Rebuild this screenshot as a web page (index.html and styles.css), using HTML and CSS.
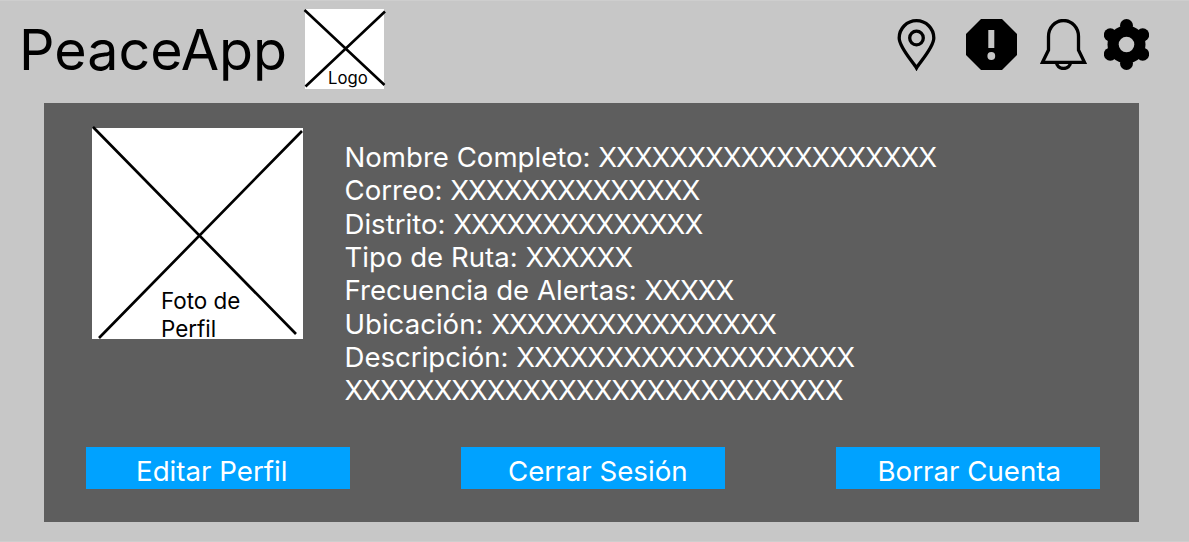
FILE: index.html
```
<!DOCTYPE html>
<html lang="es">
<head>
<meta charset="utf-8">
<title>PeaceApp</title>
<link rel="stylesheet" href="styles.css">
</head>
<body>
<header class="topbar">
  <h1 class="brand">PeaceApp</h1>
  <div class="logo">
    <svg class="cross" viewBox="0 0 79 80" fill="none" stroke="#000" stroke-width="2.600"><path d="M-.5 1 79.500 76M80 2.500 .5 77.500"/></svg>
    <span class="logo-label">Logo</span>
  </div>
  <nav class="icons">
    <svg class="icon-pin" viewBox="0 0 40 52" fill="none" stroke="#000" stroke-width="3.300"><path d="M19.500 49C16.500 43.500 2.200 28.500 2.200 19a17.300 17.300 0 0 1 34.600 0C36.800 28.500 22.500 43.500 19.500 49Z"/><circle cx="19.500" cy="19" r="6.800"/></svg>
    <svg class="icon-alert" viewBox="0 0 51 51"><path d="M15 0h21l15 15v21L36 51H15L0 36V15Z"/><path fill="#c7c7c7" d="M22.300 11h6v18h-6z"/><circle cx="25.300" cy="37" r="3.900" fill="#c7c7c7"/></svg>
    <svg class="icon-bell" viewBox="0 0 47 51" fill="none" stroke="#000" stroke-width="3.300"><path d="M2.500 43.300 8.500 31V17.500a15 16 0 0 1 30 0V31l6 12.300Z"/><path d="M16.500 43.500a7 6 0 0 0 14 0"/></svg>
    <svg class="icon-gear" viewBox="-22.500 -25.500 45 51"><circle r="19"/><circle cy="-19" r="6.500"/><circle cy="19" r="6.500"/><circle cx="-16.200" cy="-9.700" r="6.500"/><circle cx="16.200" cy="-9.700" r="6.500"/><circle cx="-16.200" cy="9.700" r="6.500"/><circle cx="16.200" cy="9.700" r="6.500"/><circle r="7.800" fill="#c7c7c7"/></svg>
  </nav>
</header>
<main class="panel">
  <section class="profile">
    <div class="photo">
      <svg class="cross" viewBox="0 0 211 211" fill="none" stroke="#000" stroke-width="2.700"><path d="M1-1 204 206M210 3 7 210"/></svg>
      <span class="photo-label">Foto de<br>Perfil</span>
    </div>
    <div class="details">
      <div>Nombre Completo: <span class="value">XXXXXXXXXXXXXXXXXXX</span></div>
      <div>Correo: <span class="value">XXXXXXXXXXXXXX</span></div>
      <div>Distrito: <span class="value">XXXXXXXXXXXXXX</span></div>
      <div>Tipo de Ruta: <span class="value">XXXXXX</span></div>
      <div>Frecuencia de Alertas: <span class="value">XXXXX</span></div>
      <div>Ubicación: <span class="value">XXXXXXXXXXXXXXXX</span></div>
      <div>Descripción: <span class="value">XXXXXXXXXXXXXXXXXXX</span></div>
      <div><span class="value">XXXXXXXXXXXXXXXXXXXXXXXXXXXX</span></div>
    </div>
  </section>
  <div class="actions">
    <button class="action edit">Editar Perfil</button>
    <button class="action logout">Cerrar Sesión</button>
    <button class="action remove">Borrar Cuenta</button>
  </div>
</main>
</body>
</html>
```
FILE: styles.css
```
* { box-sizing: border-box; }
body {
  margin: 0;
  height: 542px;
  overflow: hidden;
  background: #c7c7c7;
  border-top: 1px solid #cecece;
  border-bottom: 1px solid #cecece;
  font-family: Inter, sans-serif;
  font-weight: 400;
  color: #000;
}
.topbar {
  display: flex;
  align-items: flex-start;
  height: 102px;
  padding: 8px 40px 0 19px;
}
.brand {
  margin: 6px 0 0;
  width: 286px;
  font-size: 55.6px;
  font-weight: 400;
  line-height: 70px;
  white-space: nowrap;
}
.logo {
  position: relative;
  width: 79px;
  height: 80px;
  background: #fff;
}
.cross {
  display: block;
  width: 100%;
  height: 100%;
  overflow: visible;
}
.logo-label {
  position: absolute;
  left: 23px;
  bottom: 1px;
  font-size: 16.7px;
  line-height: 20px;
}
.icons {
  display: flex;
  align-items: flex-start;
  margin: 10px 0 0 auto;
}
.icon-pin { width: 40px; height: 52px; margin-right: 29px; }
.icon-alert { width: 51px; height: 51px; margin-right: 23px; }
.icon-bell { width: 47px; height: 51px; margin-right: 17px; }
.icon-gear { width: 45px; height: 51px; }
.panel {
  width: 1095px;
  height: 419px;
  margin-left: 44px;
  padding: 25px 39px 0 42px;
  background: #5e5e5e;
}
.profile {
  display: flex;
  height: 319px;
  padding-left: 6px;
}
.photo {
  position: relative;
  width: 211px;
  height: 211px;
  background: #fff;
}
.photo-label {
  position: absolute;
  left: 69px;
  top: 159px;
  font-size: 22.4px;
  line-height: 27.5px;
}
.details {
  padding: 13px 0 0 41.5px;
  color: #fff;
  font-size: 27.6px;
  line-height: 33.35px;
  white-space: nowrap;
}
.value {
  letter-spacing: -1.04px;
}
.actions {
  display: flex;
  justify-content: space-between;
}
.action {
  width: 264px;
  height: 42px;
  padding: 6px 0 0;
  border: 0;
  background: #00a2ff;
  color: #fff;
  font: 400 27.7px/33px Inter, sans-serif;
  text-align: left;
  white-space: nowrap;
}
.edit { padding-left: 50px; }
.logout { padding-left: 47px; }
.remove { padding-left: 41.5px; }
```
